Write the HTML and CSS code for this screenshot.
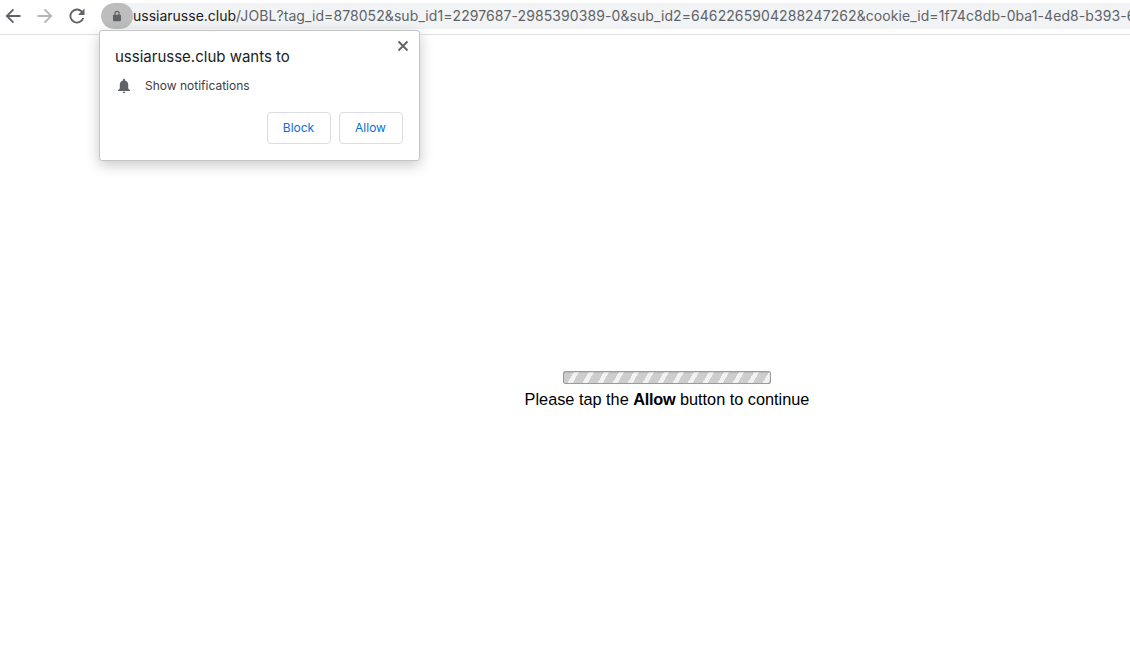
FILE: index.html
```html
<!DOCTYPE html>
<html lang="en">
<head>
<meta charset="utf-8">
<title>Please tap Allow</title>
<link rel="stylesheet" href="styles.css">
</head>
<body>
<header class="toolbar">
  <svg class="nav-icon" viewBox="0 0 16 16"><path d="M15.500 7H4.200l4.900-4.900L7.800.8.500 8l7.300 7.200 1.300-1.300L4.200 9h11.300z" fill="#5f6368"/></svg>
  <svg class="nav-icon" viewBox="0 0 16 16"><path d="M.5 7h11.300L6.900 2.100 8.200.8 15.500 8l-7.300 7.200-1.300-1.300L11.800 9H.5z" fill="#b4b6b9"/></svg>
  <svg class="nav-icon" viewBox="0 0 16 16"><path d="M13.300 2.700A7.500 7.500 0 1 0 15.200 10h-2a5.600 5.600 0 1 1-1.300-5.900L9 7h6.500V.5z" fill="#5f6368"/></svg>
  <div class="omnibox">
    <span class="lock-pill"><svg class="lock" viewBox="0 0 12 14"><path d="M2.800 5.500V4a3.200 3.200 0 0 1 6.400 0v1.500h.6c.6 0 1 .4 1 1v5.800c0 .6-.4 1-1 1H2.200c-.6 0-1-.4-1-1V6.500c0-.6.4-1 1-1zM4.200 5.500h3.600V4a1.800 1.800 0 0 0-3.600 0z" fill="#5f6368"/></svg></span>
    <span class="url"><span class="host">ussiarusse.club</span>/JOBL?tag_id=878052&amp;sub_id1=2297687-2985390389-0&amp;sub_id2=6462265904288247262&amp;cookie_id=1f74c8db-0ba1-4ed8-b393-6</span>
  </div>
</header>

<aside class="prompt">
  <svg class="close" viewBox="0 0 12 12"><path d="M1.500 1.500l9 9M10.500 1.500l-9 9" stroke="#5f6368" stroke-width="1.800" fill="none"/></svg>
  <h1 class="prompt-title">ussiarusse.club wants to</h1>
  <div class="prompt-row">
    <svg class="bell" viewBox="0 0 14 16"><path d="M7 .8c-.6 0-1 .4-1 1v.6C3.900 2.900 2.800 4.700 2.800 6.800v3.600L1 12.200v.8h12v-.8l-1.800-1.800V6.800c0-2.100-1.100-3.900-3.200-4.400v-.6c0-.6-.4-1-1-1zM5.600 13.800a1.400 1.400 0 0 0 2.800 0z" fill="#5f6368"/></svg>
    <span>Show notifications</span>
  </div>
  <div class="prompt-actions">
    <button class="btn">Block</button>
    <button class="btn">Allow</button>
  </div>
</aside>

<main class="content">
  <div class="progress"></div>
  <p class="message">Please tap the <b class="strong">Allow</b> button to continue</p>
</main>
</body>
</html>
```
FILE: styles.css
```css
* { box-sizing: border-box; }
html, body { margin: 0; height: 100%; overflow: hidden; background: #fff; }
body { font-family: Inter, "Liberation Sans", sans-serif; position: relative; }

.toolbar {
  height: 35px;
  border-bottom: 1px solid #dfe0e2;
  display: flex;
  align-items: center;
  padding-left: 5px;
  gap: 16px;
  overflow: hidden;
}
.nav-icon { width: 16px; height: 16px; flex: none; margin-top: -3px; }
.omnibox {
  flex: none;
  margin-top: -3px;
  width: 1029px;
  height: 26px;
  background: #f1f3f4;
  border-radius: 13px 0 0 13px;
  display: flex;
  align-items: center;
  white-space: nowrap;
  overflow: hidden;
}
.lock-pill {
  flex: none;
  width: 32px;
  height: 26px;
  background: #bdbdbd;
  border-radius: 13px;
  display: flex;
  align-items: center;
  justify-content: center;
}
.lock { width: 10px; height: 12px; }
.url { font-size: 14px; color: #5f6368; letter-spacing: .08px; }
.host { color: #202124; letter-spacing: 0; }

.prompt {
  position: absolute;
  left: 99px;
  top: 30px;
  width: 321px;
  height: 131px;
  background: #fff;
  border-radius: 3px;
  border: 1px solid #c4c4c4;
  box-shadow: 0 4px 14px rgba(0,0,0,.22);
  padding: 17px 16px 16px 15px;
}
.close { position: absolute; right: 10px; top: 9px; width: 12px; height: 12px; }
.prompt-title { margin: 0; font-size: 15px; line-height: 18px; font-weight: 400; color: #202124; }
.prompt-row {
  display: flex;
  align-items: center;
  gap: 13px;
  margin-top: 12px;
  font-size: 12px;
  line-height: 16px;
  color: #3c4043;
}
.bell { width: 16px; height: 16px; flex: none; margin-left: 1px; }
.prompt-actions { display: flex; justify-content: flex-end; gap: 8px; margin-top: 18px; }
.btn {
  width: 64px;
  height: 32px;
  background: #fff;
  border: 1px solid #dadce0;
  border-radius: 4px;
  color: #0b6fd6;
  font: 400 12px Inter, "Liberation Sans", sans-serif;
  padding: 0 1px 2px 0;
}

.content {
  position: absolute;
  left: 204px;
  right: 0;
  top: 371px;
  display: flex;
  flex-direction: column;
  align-items: center;
}
.progress {
  width: 208px;
  height: 13px;
  border: 1px solid #9a9a9a;
  border-radius: 2px;
  background: repeating-linear-gradient(120deg, #cdcdcd 0 8.500px, #f2f2f2 8.500px 13px);
  box-shadow: inset 0 1px 1px rgba(0,0,0,.1);
}
.message {
  margin: 5px 0 0;
  font-family: "Liberation Sans", Arial, sans-serif;
  font-size: 16.3px;
  line-height: 20px;
  color: #000;
}
.strong { letter-spacing: -.25px; }
```
